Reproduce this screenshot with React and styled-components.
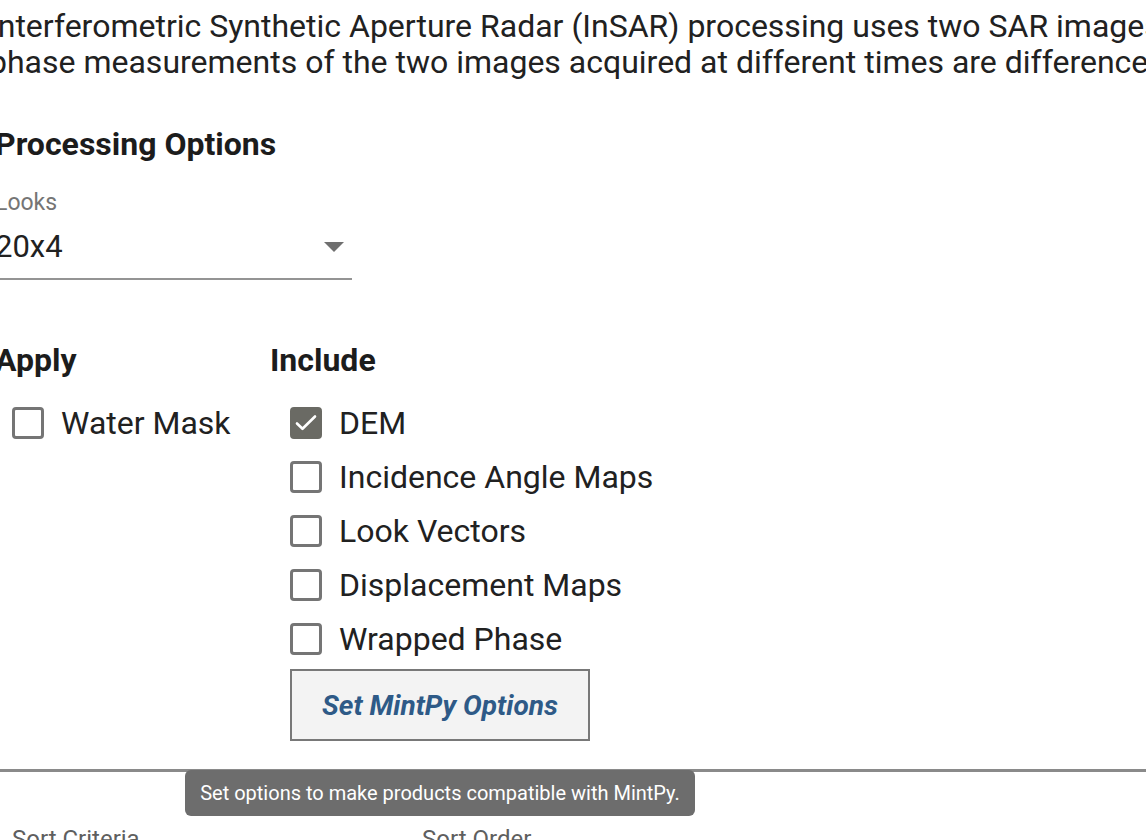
import React from 'react';
import styled, { createGlobalStyle } from 'styled-components';

const Global = createGlobalStyle`
  html, body { margin: 0; padding: 0; background: #fff; }
  body { font-family: Roboto, "Noto Sans", sans-serif; color: #212121; }
  * { box-sizing: border-box; }
`;

const Page = styled.div`
  width: 1146px;
  height: 840px;
  overflow: hidden;
`;

const Content = styled.div`
  margin-left: -5px;
  padding-top: 8px;
  width: 1400px;
`;

const Intro = styled.p`
  margin: 0 0 0 -6px;
  font-size: 32px;
  line-height: 36px;
  white-space: nowrap;
  color: #212121;
`;

const Heading = styled.h2`
  margin: ${p => p.$mt || 0}px 0 0 0;
  font-size: 32px;
  line-height: 36px;
  font-weight: 700;
  color: #1c1c1c;
`;

const Select = styled.div`
  margin-top: 28px;
  width: 357px;
  border-bottom: 2px solid #949494;
  padding-bottom: 13px;
`;

const SelectLabel = styled.div`
  font-size: 23px;
  line-height: 26px;
  color: #757575;
`;

const SelectRow = styled.div`
  display: flex;
  align-items: center;
  justify-content: space-between;
  margin-top: 13px;
  padding-right: 8px;
`;

const SelectValue = styled.span`
  font-size: 31px;
  line-height: 36px;
  color: #212121;
`;

const Arrow = styled.span`
  width: 0;
  height: 0;
  border-left: 10px solid transparent;
  border-right: 10px solid transparent;
  border-top: 10px solid #6f6f6f;
`;

const Columns = styled.div`
  display: flex;
  margin-top: 62px;
`;

const Column = styled.div`
  width: ${p => p.$w}px;
  display: flex;
  flex-direction: column;
`;

const List = styled.div`
  margin-top: 18px;
  padding-left: ${p => p.$indent}px;
  display: flex;
  flex-direction: column;
`;

const Row = styled.label`
  display: flex;
  align-items: center;
  height: 54px;
`;

const Box = styled.span`
  width: 32px;
  height: 32px;
  border-radius: 4px;
  border: 3px solid ${p => (p.$checked ? '#6a6a64' : '#757575')};
  background: ${p => (p.$checked ? '#6a6a64' : '#fff')};
  display: flex;
  align-items: center;
  justify-content: center;
  flex-shrink: 0;
`;

const CheckSvg = styled.svg`
  display: block;
  flex-shrink: 0;
  width: 26px;
  height: 26px;
`;

const Label = styled.span`
  margin-left: 17px;
  font-size: 32px;
  line-height: 36px;
  color: #212121;
`;

const ButtonWrap = styled.div`
  position: relative;
  margin-top: 3px;
  width: 300px;
`;

const Button = styled.button`
  width: 300px;
  height: 72px;
  border: 2px solid #787878;
  background: #f3f3f3;
  font-family: Roboto, "Noto Sans", sans-serif;
  font-style: italic;
  font-weight: 700;
  font-size: 28px;
  color: #2e5a87;
  padding: 0;
  cursor: pointer;
`;

const Tooltip = styled.div`
  position: absolute;
  top: 100%;
  margin-top: 29px;
  left: 50%;
  transform: translateX(-50%);
  width: 510px;
  height: 46px;
  background: #6d6d6d;
  border-radius: 6px;
  color: #fff;
  font-size: 20px;
  display: flex;
  align-items: center;
  justify-content: center;
  white-space: nowrap;
  z-index: 2;
`;

const Divider = styled.hr`
  margin: 28px 0 0 0;
  border: 0;
  height: 3px;
  background: #8a8a8a;
`;

const SortRow = styled.div`
  display: flex;
  margin-top: 53px;
  padding-left: 17px;
`;

const SortLabel = styled.div`
  width: ${p => p.$w}px;
  font-size: 24px;
  color: #5f5f5f;
  line-height: 28px;
`;

const Check = () => (
  <CheckSvg viewBox="0 0 26 26">
    <path d="M4 13.5l5.5 5.3L22 6.5" fill="none" stroke="#fff" strokeWidth="2.6" strokeLinecap="round" strokeLinejoin="round" />
  </CheckSvg>
);

const CheckRow = ({ checked, children }) => (
  <Row>
    <Box $checked={checked}>{checked && <Check />}</Box>
    <Label>{children}</Label>
  </Row>
);

export default function App() {
  return (
    <Page>
      <Global />
      <Content>
        <Intro>
          Interferometric Synthetic Aperture Radar (InSAR) processing uses two SAR images collected over the same area
          <br />
          phase measurements of the two images acquired at different times are differenced, revealing
        </Intro>
        <Heading $mt={46}>Processing Options</Heading>
        <Select>
          <SelectLabel>Looks</SelectLabel>
          <SelectRow>
            <SelectValue>20x4</SelectValue>
            <Arrow />
          </SelectRow>
        </Select>
        <Columns>
          <Column $w={275}>
            <Heading>Apply</Heading>
            <List $indent={17}>
              <CheckRow>Water Mask</CheckRow>
            </List>
          </Column>
          <Column $w={700}>
            <Heading>Include</Heading>
            <List $indent={20}>
              <CheckRow checked>DEM</CheckRow>
              <CheckRow>Incidence Angle Maps</CheckRow>
              <CheckRow>Look Vectors</CheckRow>
              <CheckRow>Displacement Maps</CheckRow>
              <CheckRow>Wrapped Phase</CheckRow>
              <ButtonWrap>
                <Button>Set MintPy Options</Button>
                <Tooltip>Set options to make products compatible with MintPy.</Tooltip>
              </ButtonWrap>
            </List>
          </Column>
        </Columns>
        <Divider />
        <SortRow>
          <SortLabel $w={410}>Sort Criteria</SortLabel>
          <SortLabel $w={300}>Sort Order</SortLabel>
        </SortRow>
      </Content>
    </Page>
  );
}
